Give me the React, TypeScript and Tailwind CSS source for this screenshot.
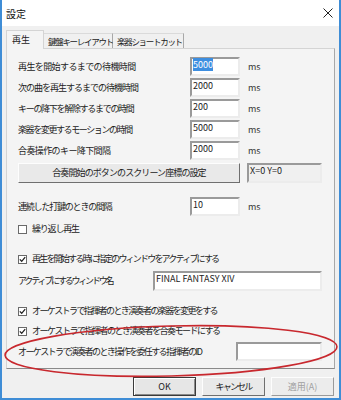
import React from 'react';

const font = "[font-family:'Noto_Sans_CJK_JP','Noto_Sans_CJK_SC',sans-serif]";
const label = 'whitespace-nowrap text-[9px] text-[#222]';

function Field({ value, selected, className }: { value?: string; selected?: boolean; className: string }) {
  return (
    <div
      className={`box-border border-2 border-t-[#9a9a9a] border-l-[#9a9a9a] border-r-[#ececec] border-b-[#ececec] bg-white pl-[1px] text-[9px] leading-[12px] text-[#222] ${className}`}
    >
      {selected ? <span className="bg-[#3d8ee0] text-white">{value}</span> : value}
    </div>
  );
}

function Check({ checked }: { checked?: boolean }) {
  return (
    <div className="box-border flex h-[9px] w-[9px] items-center justify-center border border-[#6a6a6a] bg-white">
      {checked && (
        <svg width="7" height="7" viewBox="0 0 7 7">
          <path d="M0.8 3.4 L2.7 5.3 L6.2 1.2" fill="none" stroke="#222" strokeWidth="1.3" />
        </svg>
      )}
    </div>
  );
}

function TimeRow({ text, value, selected, tr, className = '' }: { text: string; value: string; selected?: boolean; tr: string; className?: string }) {
  return (
    <div className={`flex h-[19px] items-center ${className}`}>
      <span className={`w-[172px] ${label} ${tr}`}>{text}</span>
      <Field value={value} selected={selected} className="h-[19px] w-[50px]" />
      <span className="ml-[8px] text-[9px] text-[#333]">ms</span>
    </div>
  );
}

function CheckRow({ text, checked, tr, className = '' }: { text: string; checked?: boolean; tr: string; className?: string }) {
  return (
    <div className={`flex h-[14px] items-center ${className}`}>
      <Check checked={checked} />
      <span className={`ml-[5px] ${label} ${tr}`}>{text}</span>
    </div>
  );
}

export default function App() {
  return (
    <div lang="ja" className={`relative flex h-[400px] w-[341px] flex-col border-x-2 border-b-2 border-[#3f8dd6] bg-[#f0f0f0] ${font}`}>
      {/* Title bar */}
      <div className="flex h-[26px] items-center justify-between bg-white pl-[4px] pr-[4px]">
        <span className="text-[10px] text-[#111]">設定</span>
        <svg width="10" height="10" viewBox="0 0 10 10" className="mr-[2px]">
          <path d="M0.5 0.5 L9.5 9.5 M9.5 0.5 L0.5 9.5" stroke="#222" strokeWidth="1" />
        </svg>
      </div>

      <div className="flex flex-1 flex-col px-[4px] pt-[4px]">
        {/* Tabs */}
        <div className="relative z-10 flex h-[18px] items-end whitespace-nowrap">
          <div className="-mb-px flex h-[19px] w-[38px] items-center border-x border-t border-[#d4d4d4] bg-[#f4f4f4] pl-[5px] text-[9px] text-[#222]">
            再生
          </div>
          <div className="flex h-[15px] w-[69px] items-center border-r border-t border-r-[#a8a8a8] border-t-[#dadada] pl-[4px] text-[8.5px] tracking-[-1.3px] text-[#222]">
            鍵盤キーレイアウト
          </div>
          <div className="flex h-[15px] w-[71px] items-center border-r border-t border-r-[#a8a8a8] border-t-[#dadada] pl-[4px] text-[8.5px] tracking-[-1.3px] text-[#222]">
            楽器ショートカット
          </div>
        </div>

        {/* Panel */}
        <div className="box-border flex h-[321px] flex-col border border-[#d4d4d4] border-b-[#8a8a8a] border-r-[#a8a8a8] bg-[#f4f4f4] pl-[11px] pt-[8px]">
          <TimeRow text="再生を開始するまでの待機時間" value="5000" selected tr="tracking-[-0.6px]" />
          <TimeRow text="次の曲を再生するまでの待機時間" value="2000" tr="tracking-[-1px]" className="mt-[2px]" />
          <TimeRow text="キーの降下を解除するまでの時間" value="200" tr="tracking-[-1.3px]" className="mt-[2px]" />
          <TimeRow text="楽器を変更するモーションの時間" value="5000" tr="tracking-[-1.4px]" className="mt-[2px]" />
          <TimeRow text="合奏操作のキー降下間隔" value="2000" tr="tracking-[-0.6px]" className="mt-[2px]" />

          <div className="mt-[3px] flex h-[20px] items-stretch">
            <div className={`box-border flex w-[222px] items-center justify-center border border-t-[#fdfdfd] border-l-[#fdfdfd] border-r-[#6f6f6f] border-b-[#6f6f6f] bg-[#e9e9e9] ${label} tracking-[-0.9px]`}>
              合奏開始のボタンのスクリーン座標の設定
            </div>
            <div className="ml-[7px] box-border w-[75px] border-2 border-t-[#9a9a9a] border-l-[#9a9a9a] border-r-[#ececec] border-b-[#ececec] bg-[#f0f0f0] pl-[1px] text-[9px] leading-[12px] text-[#222]">
              X=0 Y=0
            </div>
          </div>

          <TimeRow text="連続した打鍵のときの間隔" value="10" tr="tracking-[-1.2px]" className="mt-[14px]" />

          <CheckRow text="繰り返し再生" tr="tracking-[-1.2px]" className="mt-[6px]" />
          <CheckRow text="再生を開始する時に指定のウィンドウをアクティブにする" checked tr="tracking-[-1.8px]" className="mt-[16px]" />

          <div className="mt-[5px] flex h-[20px] items-center">
            <span className={`w-[135px] ${label} tracking-[-2.2px]`}>アクティブにするウィンドウ名</span>
            <Field value="FINAL FANTASY XIV" className="h-[20px] w-[169px] text-[8.5px]" />
          </div>

          <CheckRow text="オーケストラで指揮者のとき演奏者の楽器を変更をする" checked tr="tracking-[-1.6px]" className="mt-[13px]" />
          <CheckRow text="オーケストラで指揮者のとき演奏者を合奏モードにする" checked tr="tracking-[-1.5px]" className="mt-[6px]" />

          <div className="mt-[4px] flex h-[19px] items-center">
            <span className={`w-[218px] ${label} tracking-[-1.6px]`}>オーケストラで演奏者のとき操作を委任する指揮者のID</span>
            <Field className="h-[19px] w-[86px]" />
          </div>
        </div>

        {/* Dialog buttons */}
        <div className="mt-[8px] flex h-[19px] justify-end gap-[6px] pr-[1px]">
          <div className="box-border flex w-[63px] items-center justify-center border border-[#3a3a3a] bg-[#e6e6e6] text-[9px] text-[#222] shadow-[inset_1px_1px_0_#fff,inset_-1px_-1px_0_#8a8a8a]">
            OK
          </div>
          <div className={`box-border flex w-[63px] items-center justify-center border border-t-[#fdfdfd] border-l-[#fdfdfd] border-r-[#6f6f6f] border-b-[#6f6f6f] bg-[#e9e9e9] ${label} tracking-[-1.8px]`}>
            キャンセル
          </div>
          <div className="box-border flex w-[63px] items-center justify-center border border-t-[#fdfdfd] border-l-[#fdfdfd] border-r-[#9a9a9a] border-b-[#9a9a9a] bg-[#ececec] text-[9px] text-[#a0a0a0]">
            適用(A)
          </div>
        </div>
      </div>

      {/* Red annotation ellipse */}
      <svg className="pointer-events-none absolute left-0 top-0" width="341" height="400" viewBox="0 0 341 400">
        <ellipse cx="169" cy="351" rx="166" ry="25" fill="none" stroke="#c8282e" strokeWidth="1.6" transform="rotate(-1.5 169 351)" />
      </svg>
    </div>
  );
}
